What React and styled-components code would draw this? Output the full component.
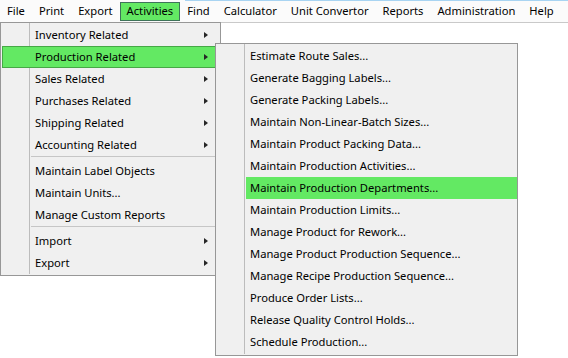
import React from "react";
import styled, { createGlobalStyle, css } from "styled-components";

const GlobalStyle = createGlobalStyle`
  html, body { margin: 0; padding: 0; background: #ffffff; }
  body { font-family: "Noto Sans", "Liberation Sans", sans-serif; }
  * { box-sizing: border-box; }
`;

const GREEN = "#63e963";

const Page = styled.div`
  position: relative;
  width: 568px;
  height: 358px;
  overflow: hidden;
  background: #ffffff;
  font-size: 11.2px;
  color: #000;
`;

const MenuBar = styled.div`
  position: relative;
  display: flex;
  align-items: flex-start;
  height: 23px;
  padding-top: 2px;
  background: #fbfbfb;
  border-bottom: 1px solid #c9c9c9;
  &::before {
    content: "";
    position: absolute;
    left: 185px;
    right: 0;
    top: 0;
    height: 1px;
    background: #a8d4f2;
  }
`;

const BarItem = styled.div`
  height: 19px;
  line-height: 16px;
  padding: 0 6px;
  border: 1px solid transparent;
  white-space: nowrap;
  ${(p) =>
    p.$active &&
    css`
      background: ${GREEN};
      border-color: #3f735a;
    `}
`;

const Menu = styled.div`
  position: absolute;
  left: ${(p) => p.$left}px;
  top: ${(p) => p.$top}px;
  width: ${(p) => p.$width}px;
  background: #f0f0f0;
  border: 1px solid #979797;
  padding: 1px 1px ${(p) => p.$padBottom}px 1px;
  &::before {
    content: "";
    position: absolute;
    left: 28px;
    top: 0;
    bottom: 1px;
    width: 1px;
    background: #bcbcbc;
  }
`;

const Item = styled.div`
  position: relative;
  display: flex;
  align-items: center;
  justify-content: space-between;
  height: 22px;
  padding: 0 10px 2px 32px;
  white-space: nowrap;
  border: 1px solid transparent;
  ${(p) =>
    p.$state === "open" &&
    css`
      background: ${GREEN};
      border-color: #46a846;
    `}
  ${(p) =>
    p.$state === "hover" &&
    css`
      background: ${GREEN};
      margin-left: 29px;
      margin-right: -1px;
      padding-left: 4px;
      border: none;
    `}
`;

const Arrow = styled.span`
  width: 0;
  height: 0;
  margin-top: 2px;
  border-left: 4px solid #262626;
  border-top: 3.5px solid transparent;
  border-bottom: 3.5px solid transparent;
`;

const Separator = styled.div`
  position: relative;
  height: 4px;
  margin-left: 29px;
  &::after {
    content: "";
    position: absolute;
    left: 0;
    right: 0;
    top: 0;
    height: 1px;
    background: #c6c6c6;
  }
`;

const barItems = [
  "File",
  "Print",
  "Export",
  "Activities",
  "Find",
  "Calculator",
  "Unit Convertor",
  "Reports",
  "Administration",
  "Help",
];

const activitiesMenu = [
  { label: "Inventory Related", sub: true },
  { label: "Production Related", sub: true, state: "open" },
  { label: "Sales Related", sub: true },
  { label: "Purchases Related", sub: true },
  { label: "Shipping Related", sub: true },
  { label: "Accounting Related", sub: true },
  { sep: true },
  { label: "Maintain Label Objects" },
  { label: "Maintain Units..." },
  { label: "Manage Custom Reports" },
  { sep: true },
  { label: "Import", sub: true },
  { label: "Export", sub: true },
];

const productionMenu = [
  "Estimate Route Sales...",
  "Generate Bagging Labels...",
  "Generate Packing Labels...",
  "Maintain Non-Linear-Batch Sizes...",
  "Maintain Product Packing Data...",
  "Maintain Production Activities...",
  "Maintain Production Departments...",
  "Maintain Production Limits...",
  "Manage Product for Rework...",
  "Manage Product Production Sequence...",
  "Manage Recipe Production Sequence...",
  "Produce Order Lists...",
  "Release Quality Control Holds...",
  "Schedule Production...",
];

export default function App() {
  return (
    <>
      <GlobalStyle />
      <Page>
        <MenuBar>
          {barItems.map((b) => (
            <BarItem key={b} $active={b === "Activities"}>
              {b}
            </BarItem>
          ))}
        </MenuBar>
        <Menu $left={0} $top={22} $width={221} $padBottom={1}>
          {activitiesMenu.map((m, i) =>
            m.sep ? (
              <Separator key={i} />
            ) : (
              <Item key={i} $state={m.state}>
                <span>{m.label}</span>
                {m.sub && <Arrow />}
              </Item>
            )
          )}
          <Menu $left={214} $top={20} $width={303} $padBottom={2}>
            {productionMenu.map((label) => (
              <Item
                key={label}
                $state={label === "Maintain Production Departments..." ? "hover" : undefined}
              >
                <span>{label}</span>
              </Item>
            ))}
          </Menu>
        </Menu>
      </Page>
    </>
  );
}
